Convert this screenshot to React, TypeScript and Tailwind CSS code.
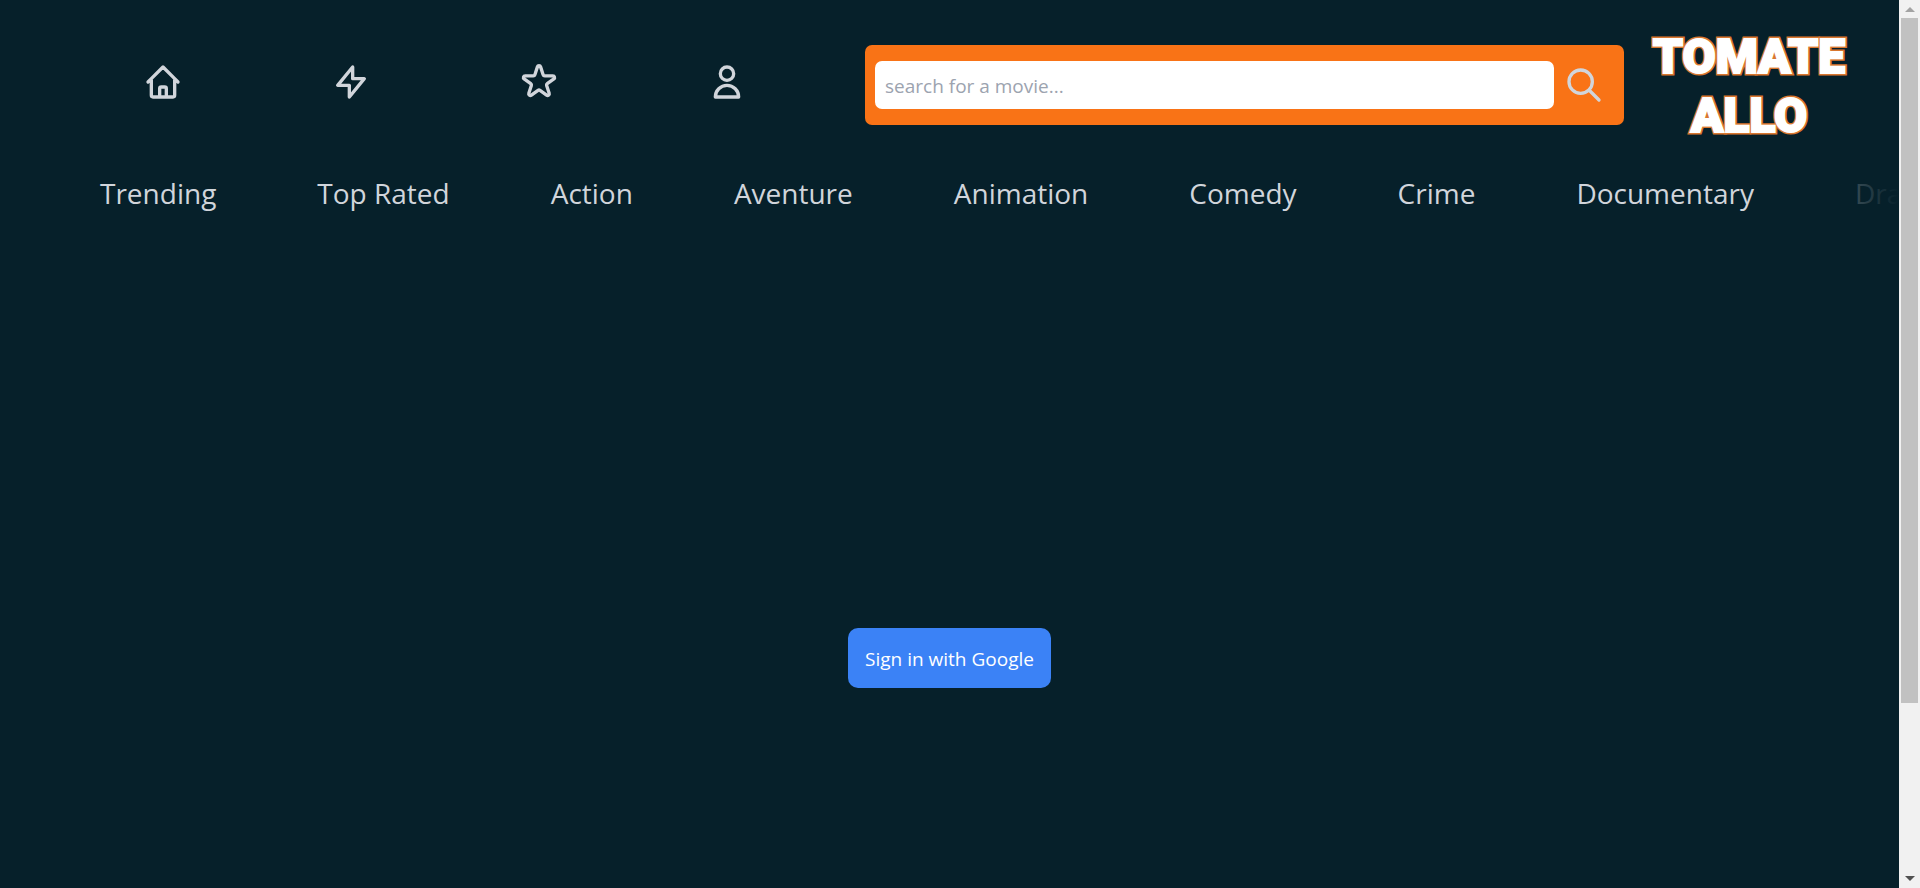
import React from "react";
import {
  HiOutlineHome,
  HiOutlineLightningBolt,
  HiOutlineSearch,
  HiOutlineStar,
  HiOutlineUser,
} from "react-icons/hi";

const links = [
  { label: "Home", Icon: HiOutlineHome },
  { label: "Trending now", Icon: HiOutlineLightningBolt },
  { label: "Favorites", Icon: HiOutlineStar },
  { label: "Account", Icon: HiOutlineUser },
];

const genres = [
  "Trending",
  "Top Rated",
  "Action",
  "Aventure",
  "Animation",
  "Comedy",
  "Crime",
  "Documentary",
  "Drama",
];

function Header() {
  return (
    <header className="flex h-[170px] items-center pl-[69px] pr-[50px]">
      <nav aria-label="Main" className="flex basis-[752px] pb-[6px]">
        {links.map(({ label, Icon }) => (
          <a key={label} href="#" aria-label={label} className="flex flex-1 justify-center text-[#d1d5db]">
            <Icon className="size-10" />
          </a>
        ))}
      </nav>
      <form
        role="search"
        className="ml-11 flex h-20 flex-1 items-center gap-[10px] rounded-[7px] bg-[#f97316] pl-[10px] pr-5"
      >
        <input
          type="search"
          aria-label="Search for a movie"
          placeholder="search for a movie..."
          className="h-12 min-w-0 flex-1 rounded-[7px] bg-white px-[10px] pt-0.5 text-[19px] text-gray-900 placeholder:text-[#9ca3af]"
        />
        <button type="submit" aria-label="Search" className="text-[#d1d5db]">
          <HiOutlineSearch className="size-10" />
        </button>
      </form>
      <Logo />
    </header>
  );
}

function Logo() {
  return (
    <a href="#" aria-label="Tomate Allo" className="ml-[25px] w-[200px] shrink-0">
      <svg viewBox="0 0 200 116" className="block w-full overflow-visible">
        <g
          className="fill-white stroke-[#d9772f] font-['Roboto'] text-[48px] font-black"
          strokeWidth="5"
          strokeLinejoin="miter"
          paintOrder="stroke"
          textAnchor="middle"
        >
          <text x="100" y="46">TOMATE</text>
          <text x="100" y="105">ALLO</text>
        </g>
        <g
          className="fill-white stroke-white font-['Roboto'] text-[48px] font-black"
          strokeWidth="2"
          textAnchor="middle"
          aria-hidden="true"
        >
          <text x="100" y="46">TOMATE</text>
          <text x="100" y="105">ALLO</text>
        </g>
      </svg>
    </a>
  );
}

function Genres() {
  return (
    <nav aria-label="Genres" className="relative">
      <ul className="flex h-11 items-center gap-[101px] overflow-hidden whitespace-nowrap pl-[100px] pt-0.5 text-[28px] leading-10 text-[#d1d5db]">
        {genres.map((genre) => (
          <li key={genre}>
            <a href="#">{genre}</a>
          </li>
        ))}
      </ul>
      <div className="absolute inset-y-0 right-0 w-24 bg-gradient-to-l from-[#06202a] via-[#06202a]/75 via-50% to-transparent" />
    </nav>
  );
}

function ScrollRail() {
  return (
    <div aria-hidden="true" className="flex h-screen w-[21px] shrink-0 flex-col items-center bg-[#f1f1f1]">
      <div className="flex h-[18px] items-center">
        <svg viewBox="0 0 10 5" className="h-[5px] w-[10px] fill-[#a3a3a3]">
          <path d="M5 0 10 5H0z" />
        </svg>
      </div>
      <div className="w-[17px] grow-[685] basis-0 bg-[#c1c1c1]" />
      <div className="grow-[165] basis-0" />
      <div className="flex h-[20px] items-center">
        <svg viewBox="0 0 10 5" className="h-[5px] w-[10px] fill-[#505050]">
          <path d="M0 0H10L5 5z" />
        </svg>
      </div>
    </div>
  );
}

export default function App() {
  return (
    <div className="flex h-screen overflow-hidden bg-[#06202a] font-['Open_Sans','Noto_Sans',sans-serif]">
      <div className="min-w-0 flex-1">
        <Header />
        <Genres />
        <main className="flex h-screen items-center justify-center">
          <button
            type="button"
            className="h-[60px] rounded-[10px] bg-[#3b82f6] px-[17px] pt-0.5 text-[19px] text-white"
          >
            Sign in with Google
          </button>
        </main>
      </div>
      <ScrollRail />
    </div>
  );
}
